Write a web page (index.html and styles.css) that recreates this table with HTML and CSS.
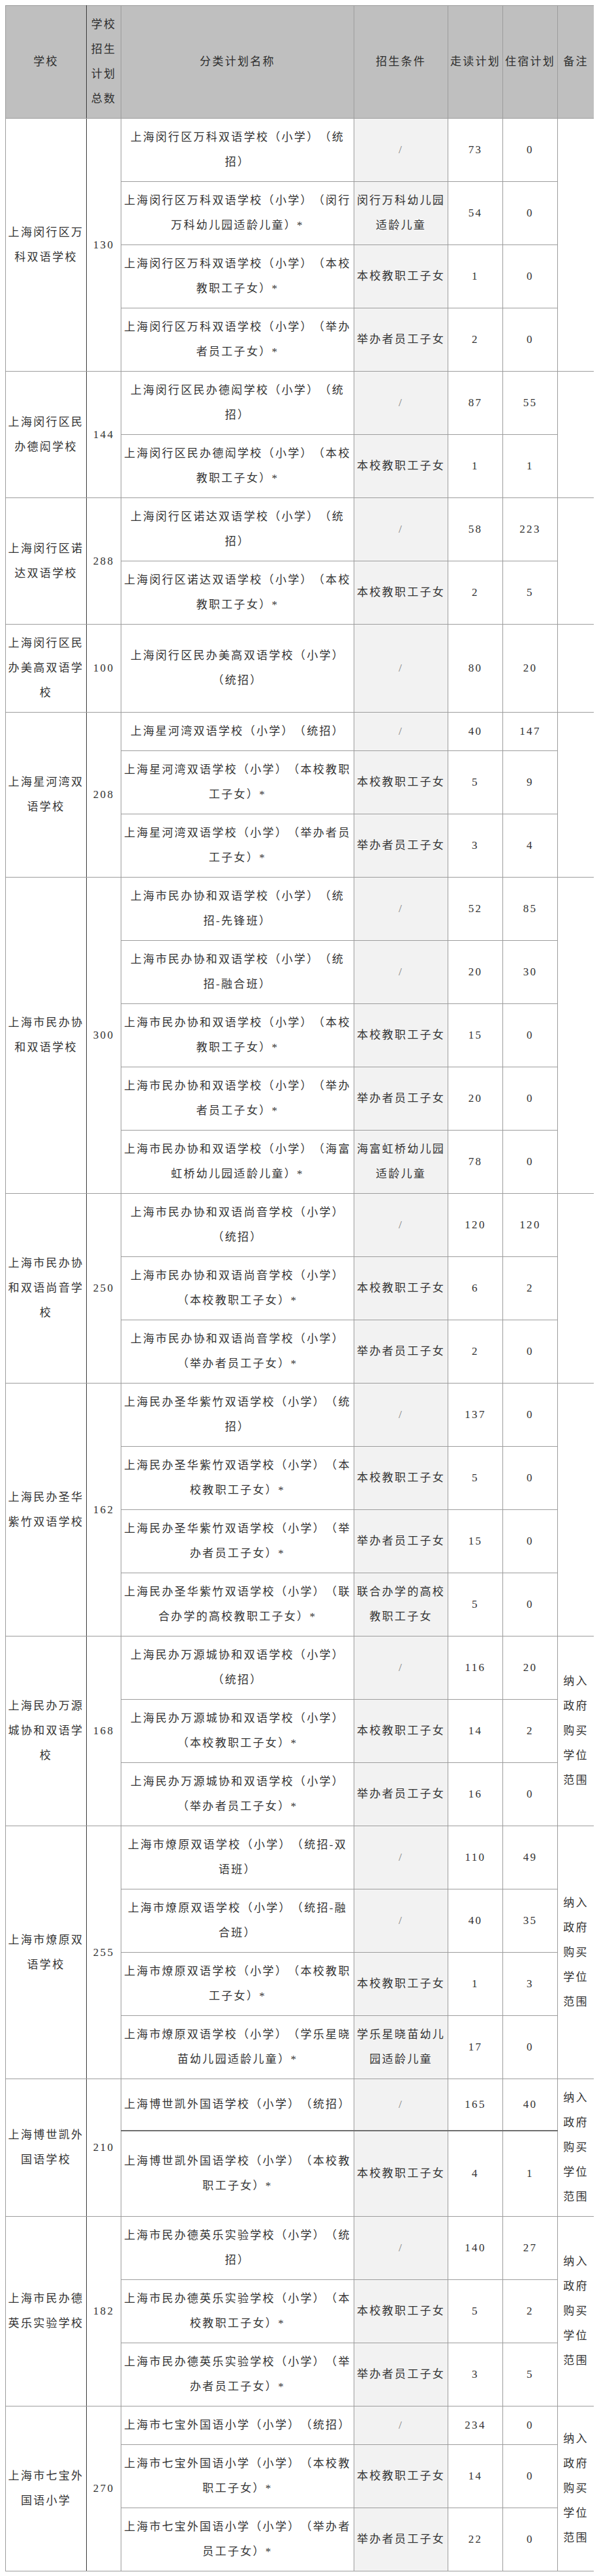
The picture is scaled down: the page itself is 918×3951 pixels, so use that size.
FILE: index.html
```html
<!DOCTYPE html>
<html lang="zh-CN">
<head>
<meta charset="utf-8">
<title>民办小学招生计划</title>
<link rel="stylesheet" href="styles.css">
</head>
<body>
<table class="plan">
  <colgroup>
    <col class="c-school">
    <col class="c-total">
    <col class="c-name">
    <col class="c-cond">
    <col class="c-day">
    <col class="c-board">
    <col class="c-note">
  </colgroup>
  <thead>
    <tr>
      <th class="school">学校</th>
      <th>学校招生计划总数</th>
      <th>分类计划名称</th>
      <th>招生条件</th>
      <th>走读计划</th>
      <th>住宿计划</th>
      <th>备注</th>
    </tr>
  </thead>
  <tbody>
    <tr>
      <td class="school" rowspan="4">上海闵行区万科双语学校</td>
      <td rowspan="4">130</td>
      <td>上海闵行区万科双语学校（小学）（统招）</td>
      <td class="cond"><span class="slash">/</span></td>
      <td>73</td>
      <td>0</td>
      <td rowspan="4"></td>
    </tr>
    <tr>
      <td>上海闵行区万科双语学校（小学）（闵行万科幼儿园适龄儿童）*</td>
      <td class="cond">闵行万科幼儿园适龄儿童</td>
      <td>54</td>
      <td>0</td>
    </tr>
    <tr>
      <td>上海闵行区万科双语学校（小学）（本校教职工子女）*</td>
      <td class="cond">本校教职工子女</td>
      <td>1</td>
      <td>0</td>
    </tr>
    <tr>
      <td>上海闵行区万科双语学校（小学）（举办者员工子女）*</td>
      <td class="cond">举办者员工子女</td>
      <td>2</td>
      <td>0</td>
    </tr>

    <tr>
      <td class="school" rowspan="2">上海闵行区民办德闳学校</td>
      <td rowspan="2">144</td>
      <td>上海闵行区民办德闳学校（小学）（统招）</td>
      <td class="cond"><span class="slash">/</span></td>
      <td>87</td>
      <td>55</td>
      <td rowspan="2"></td>
    </tr>
    <tr>
      <td>上海闵行区民办德闳学校（小学）（本校教职工子女）*</td>
      <td class="cond">本校教职工子女</td>
      <td>1</td>
      <td>1</td>
    </tr>

    <tr>
      <td class="school" rowspan="2">上海闵行区诺达双语学校</td>
      <td rowspan="2">288</td>
      <td>上海闵行区诺达双语学校（小学）（统招）</td>
      <td class="cond"><span class="slash">/</span></td>
      <td>58</td>
      <td>223</td>
      <td rowspan="2"></td>
    </tr>
    <tr>
      <td>上海闵行区诺达双语学校（小学）（本校教职工子女）*</td>
      <td class="cond">本校教职工子女</td>
      <td>2</td>
      <td>5</td>
    </tr>

    <tr>
      <td class="school">上海闵行区民办美高双语学校</td>
      <td>100</td>
      <td>上海闵行区民办美高双语学校（小学）（统招）</td>
      <td class="cond"><span class="slash">/</span></td>
      <td>80</td>
      <td>20</td>
      <td></td>
    </tr>

    <tr>
      <td class="school" rowspan="3">上海星河湾双语学校</td>
      <td rowspan="3">208</td>
      <td>上海星河湾双语学校（小学）（统招）</td>
      <td class="cond"><span class="slash">/</span></td>
      <td>40</td>
      <td>147</td>
      <td rowspan="3"></td>
    </tr>
    <tr>
      <td>上海星河湾双语学校（小学）（本校教职工子女）*</td>
      <td class="cond">本校教职工子女</td>
      <td>5</td>
      <td>9</td>
    </tr>
    <tr>
      <td>上海星河湾双语学校（小学）（举办者员工子女）*</td>
      <td class="cond">举办者员工子女</td>
      <td>3</td>
      <td>4</td>
    </tr>

    <tr>
      <td class="school" rowspan="5">上海市民办协和双语学校</td>
      <td rowspan="5">300</td>
      <td>上海市民办协和双语学校（小学）（统招-先锋班）</td>
      <td class="cond"><span class="slash">/</span></td>
      <td>52</td>
      <td>85</td>
      <td rowspan="5"></td>
    </tr>
    <tr>
      <td>上海市民办协和双语学校（小学）（统招-融合班）</td>
      <td class="cond"><span class="slash">/</span></td>
      <td>20</td>
      <td>30</td>
    </tr>
    <tr>
      <td>上海市民办协和双语学校（小学）（本校教职工子女）*</td>
      <td class="cond">本校教职工子女</td>
      <td>15</td>
      <td>0</td>
    </tr>
    <tr>
      <td>上海市民办协和双语学校（小学）（举办者员工子女）*</td>
      <td class="cond">举办者员工子女</td>
      <td>20</td>
      <td>0</td>
    </tr>
    <tr>
      <td>上海市民办协和双语学校（小学）（海富虹桥幼儿园适龄儿童）*</td>
      <td class="cond">海富虹桥幼儿园适龄儿童</td>
      <td>78</td>
      <td>0</td>
    </tr>

    <tr>
      <td class="school" rowspan="3">上海市民办协和双语尚音学校</td>
      <td rowspan="3">250</td>
      <td>上海市民办协和双语尚音学校（小学）（统招）</td>
      <td class="cond"><span class="slash">/</span></td>
      <td>120</td>
      <td>120</td>
      <td rowspan="3"></td>
    </tr>
    <tr>
      <td>上海市民办协和双语尚音学校（小学）（本校教职工子女）*</td>
      <td class="cond">本校教职工子女</td>
      <td>6</td>
      <td>2</td>
    </tr>
    <tr>
      <td>上海市民办协和双语尚音学校（小学）（举办者员工子女）*</td>
      <td class="cond">举办者员工子女</td>
      <td>2</td>
      <td>0</td>
    </tr>

    <tr>
      <td class="school" rowspan="4">上海民办圣华紫竹双语学校</td>
      <td rowspan="4">162</td>
      <td>上海民办圣华紫竹双语学校（小学）（统招）</td>
      <td class="cond"><span class="slash">/</span></td>
      <td>137</td>
      <td>0</td>
      <td rowspan="4"></td>
    </tr>
    <tr>
      <td>上海民办圣华紫竹双语学校（小学）（本校教职工子女）*</td>
      <td class="cond">本校教职工子女</td>
      <td>5</td>
      <td>0</td>
    </tr>
    <tr>
      <td>上海民办圣华紫竹双语学校（小学）（举办者员工子女）*</td>
      <td class="cond">举办者员工子女</td>
      <td>15</td>
      <td>0</td>
    </tr>
    <tr>
      <td>上海民办圣华紫竹双语学校（小学）（联合办学的高校教职工子女）*</td>
      <td class="cond">联合办学的高校教职工子女</td>
      <td>5</td>
      <td>0</td>
    </tr>

    <tr>
      <td class="school" rowspan="3">上海民办万源城协和双语学校</td>
      <td rowspan="3">168</td>
      <td>上海民办万源城协和双语学校（小学）（统招）</td>
      <td class="cond"><span class="slash">/</span></td>
      <td>116</td>
      <td>20</td>
      <td rowspan="3">纳入政府购买学位范围</td>
    </tr>
    <tr>
      <td>上海民办万源城协和双语学校（小学）（本校教职工子女）*</td>
      <td class="cond">本校教职工子女</td>
      <td>14</td>
      <td>2</td>
    </tr>
    <tr>
      <td>上海民办万源城协和双语学校（小学）（举办者员工子女）*</td>
      <td class="cond">举办者员工子女</td>
      <td>16</td>
      <td>0</td>
    </tr>

    <tr>
      <td class="school" rowspan="4">上海市燎原双语学校</td>
      <td rowspan="4">255</td>
      <td>上海市燎原双语学校（小学）（统招-双语班）</td>
      <td class="cond"><span class="slash">/</span></td>
      <td>110</td>
      <td>49</td>
      <td rowspan="4">纳入政府购买学位范围</td>
    </tr>
    <tr>
      <td>上海市燎原双语学校（小学）（统招-融合班）</td>
      <td class="cond"><span class="slash">/</span></td>
      <td>40</td>
      <td>35</td>
    </tr>
    <tr>
      <td>上海市燎原双语学校（小学）（本校教职工子女）*</td>
      <td class="cond">本校教职工子女</td>
      <td>1</td>
      <td>3</td>
    </tr>
    <tr>
      <td>上海市燎原双语学校（小学）（学乐星晓苗幼儿园适龄儿童）*</td>
      <td class="cond">学乐星晓苗幼儿园适龄儿童</td>
      <td>17</td>
      <td>0</td>
    </tr>

    <tr>
      <td class="school" rowspan="2">上海博世凯外国语学校</td>
      <td rowspan="2">210</td>
      <td>上海博世凯外国语学校（小学）（统招）</td>
      <td class="cond"><span class="slash">/</span></td>
      <td>165</td>
      <td>40</td>
      <td rowspan="2">纳入政府购买学位范围</td>
    </tr>
    <tr class="heavy">
      <td>上海博世凯外国语学校（小学）（本校教职工子女）*</td>
      <td class="cond">本校教职工子女</td>
      <td>4</td>
      <td>1</td>
    </tr>

    <tr>
      <td class="school" rowspan="3">上海市民办德英乐实验学校</td>
      <td rowspan="3">182</td>
      <td>上海市民办德英乐实验学校（小学）（统招）</td>
      <td class="cond"><span class="slash">/</span></td>
      <td>140</td>
      <td>27</td>
      <td rowspan="3">纳入政府购买学位范围</td>
    </tr>
    <tr>
      <td>上海市民办德英乐实验学校（小学）（本校教职工子女）*</td>
      <td class="cond">本校教职工子女</td>
      <td>5</td>
      <td>2</td>
    </tr>
    <tr>
      <td>上海市民办德英乐实验学校（小学）（举办者员工子女）*</td>
      <td class="cond">举办者员工子女</td>
      <td>3</td>
      <td>5</td>
    </tr>

    <tr>
      <td class="school" rowspan="3">上海市七宝外国语小学</td>
      <td rowspan="3">270</td>
      <td>上海市七宝外国语小学（小学）（统招）</td>
      <td class="cond"><span class="slash">/</span></td>
      <td>234</td>
      <td>0</td>
      <td rowspan="3">纳入政府购买学位范围</td>
    </tr>
    <tr>
      <td>上海市七宝外国语小学（小学）（本校教职工子女）*</td>
      <td class="cond">本校教职工子女</td>
      <td>14</td>
      <td>0</td>
    </tr>
    <tr>
      <td>上海市七宝外国语小学（小学）（举办者员工子女）*</td>
      <td class="cond">举办者员工子女</td>
      <td>22</td>
      <td>0</td>
    </tr>
  </tbody>
</table>
</body>
</html>
```

FILE: styles.css
```css
html {
  background: #ffffff;
}

body {
  margin: 8px;
  font-family: "Liberation Serif", "Noto Sans CJK SC", serif;
  font-size: 17px;
  color: #333333;
}

.plan {
  width: 902px;
  border-collapse: collapse;
  table-layout: fixed;
  letter-spacing: 2.3px;
  text-spacing-trim: space-all;
}

.c-school { width: 124px; }
.c-total { width: 53px; }
.c-name { width: 357px; }
.c-cond { width: 144px; }
.c-day { width: 84px; }
.c-board { width: 84px; }
.c-note { width: 56px; }

.plan th,
.plan td {
  border: 1px solid #9c9c9c;
  padding: 10px 2px;
  line-height: 38px;
  text-align: center;
  vertical-align: middle;
  font-weight: normal;
}

.plan th {
  background: #bfbfbf;
  color: #2e2e2e;
  padding-left: 0;
  padding-right: 0;
}

.plan .school {
  border-right-color: #3a3a3a;
}

.plan td.cond {
  background: #f2f2f2;
}

.slash {
  color: #777777;
}

.heavy td {
  border-top: 2px solid #6e6e6e;
}
```
